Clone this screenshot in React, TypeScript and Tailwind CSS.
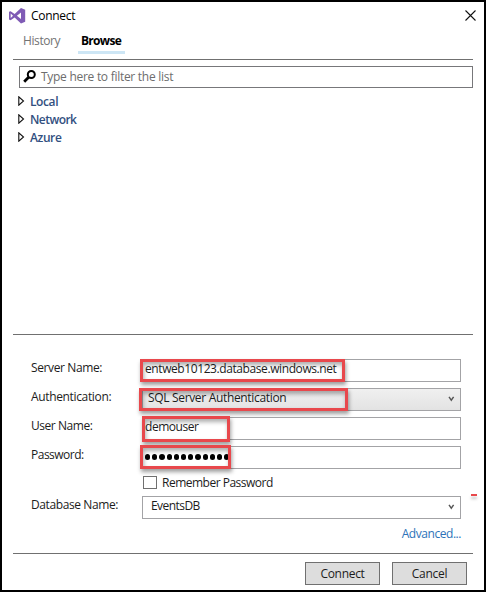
import type { ReactNode } from "react";

const highlight =
  "pointer-events-none absolute border-[3px] border-[#e8484c] shadow-[1px_3px_4px_rgba(0,0,0,0.38),inset_1px_3px_4px_rgba(0,0,0,0.32)]";

function StudioLogo() {
  return (
    <svg width="17" height="16" viewBox="0 0 17 16" className="shrink-0">
      <path
        fillRule="evenodd"
        fill="#7f5bb5"
        d="M12 0 16.2 1.8V13.8L12 15.6 5.6 9.4 1.6 12.2 0 11.4V3.8L1.6 3.2 5.6 6.1ZM12 4.6 7.9 7.8 12 11ZM1.7 5.5V10L4 7.8Z"
      />
    </svg>
  );
}

function Chevron() {
  return (
    <svg width="7" height="6" viewBox="0 0 7 6" className="mr-[5px] mb-[2px] shrink-0">
      <path d="M1 .8 3.3 4.2 5.6 .8" fill="none" stroke="#555" strokeWidth="1.4" />
    </svg>
  );
}

function TreeItem({ label, tracking }: { label: string; tracking: string }) {
  return (
    <div className="flex h-[18px] items-center">
      <svg width="7" height="10" viewBox="0 0 7 10" className="mr-[5px] mb-[2px] shrink-0">
        <path d="M.8 .8V9.2L5.5 5Z" fill="none" stroke="#111" strokeWidth="1.1" />
      </svg>
      <span className={`font-semibold text-[#32507f] ${tracking}`}>{label}</span>
    </div>
  );
}

function Field({
  label,
  tracking,
  box,
  children,
}: {
  label: string;
  tracking: string;
  box: string;
  children: ReactNode;
}) {
  return (
    <div className="flex h-[23px]">
      <label className={`w-[111px] shrink-0 pt-px ${tracking}`}>{label}</label>
      <div className={`relative flex h-[23px] w-[319px] items-center border border-[#a3a3a6] ${box}`}>
        {children}
      </div>
    </div>
  );
}

export default function App() {
  return (
    <div className="flex h-[592px] w-[486px] flex-col border-2 border-black bg-white font-['Open_Sans','Noto_Sans',sans-serif] text-[12px] leading-[16px] text-[#1c1c1c]">
      <header className="flex h-[27px] items-center pr-[8px] pl-[7px]">
        <StudioLogo />
        <span className="ml-[5px] pt-px tracking-[-0.3px] text-black">Connect</span>
        <svg width="11" height="11" viewBox="0 0 11 11" className="ml-auto">
          <path d="M.5 .5 10.5 10.5M10.5 .5 .5 10.5" stroke="#111" strokeWidth="1.1" />
        </svg>
      </header>

      <main className="mx-[11px] flex flex-1 flex-col">
        <nav className="flex h-[31px] border-b border-[#707070] pt-[4px] pl-[7px]">
          <span className="w-[58px] pl-[3px] tracking-[-0.4px] text-[#737373]">History</span>
          <span className="h-[21px] w-[47px] border-b-[3px] border-[#cde6f5] pl-[3px] font-bold tracking-[-0.7px] text-black">
            Browse
          </span>
        </nav>

        <div className="mt-[6px] ml-[6px] flex h-[22px] w-[454px] items-center border border-[#77777a] pl-[3px]">
          <svg width="13" height="13" viewBox="0 0 13 13" className="mb-px shrink-0">
            <circle cx="8.3" cy="4.5" r="3.5" fill="none" stroke="#000" strokeWidth="2" />
            <path d="M5.6 7.2 1.2 11.7" stroke="#000" strokeWidth="2.8" />
          </svg>
          <span className="ml-[5px] tracking-[-0.28px] text-[#6d6d6d]">Type here to filter the list</span>
        </div>

        <div className="mt-[5px] ml-[5px] h-[241px]">
          <TreeItem label="Local" tracking="tracking-[-0.4px]" />
          <TreeItem label="Network" tracking="tracking-[-0.55px]" />
          <TreeItem label="Azure" tracking="tracking-[-0.4px]" />
        </div>

        <form className="flex h-[220px] w-[460px] flex-col gap-[6px] border-y border-[#707070] pt-[24px] pl-[18px]">
          <Field label="Server Name:" tracking="tracking-[-0.38px]" box="bg-white">
            <span className="mb-[3px] ml-[2px] tracking-[-0.41px]">entweb10123.database.windows.net</span>
            <span className={`${highlight} -top-px -left-[3px] h-[23px] w-[205px]`} />
          </Field>
          <Field
            label="Authentication:"
            tracking="tracking-[-0.35px]"
            box="justify-between bg-linear-to-b from-[#f0f0f0] to-[#e3e3e3]"
          >
            <span className="mb-[4px] ml-[5px] tracking-[-0.33px]">SQL Server Authentication</span>
            <Chevron />
            <span className={`${highlight} -top-px -left-[4px] h-[23px] w-[209px]`} />
          </Field>
          <Field label="User Name:" tracking="tracking-[-0.45px]" box="bg-white">
            <span className="mb-[3px] ml-[2px] tracking-[-0.45px]">demouser</span>
            <span className={`${highlight} -top-[2px] -left-px h-[26px] w-[88px]`} />
          </Field>
          <Field label="Password:" tracking="tracking-[-0.5px]" box="bg-white">
            <span className="mb-[2px] ml-[2px] flex gap-[1.9px]">
              {Array.from({ length: 12 }, (_, i) => (
                <i key={i} className="h-[6px] w-[5.3px] rounded-full bg-black" />
              ))}
            </span>
            <span className={`${highlight} -top-[2px] -left-[3px] h-[24px] w-[91px]`} />
          </Field>
          <div className="ml-[112px] flex h-[15px] items-center">
            <span className="h-[13px] w-[14px] border border-[#707070] bg-white" />
            <span className="ml-[5px] tracking-[-0.5px]">Remember Password</span>
          </div>
          <Field label="Database Name:" tracking="tracking-[-0.4px]" box="justify-between bg-white">
            <span className="mb-[3px] ml-[8px] tracking-[-0.55px]">EventsDB</span>
            <Chevron />
            <span className="absolute -top-[3px] left-[328px] h-[2px] w-[6px] bg-[#e8484c] shadow-[0_3px_3px_rgba(0,0,0,0.25)]" />
          </Field>
          <a className="mt-px mr-[12px] self-end tracking-[-0.45px] text-[#2d73b9]">Advanced...</a>
        </form>

        <footer className="mt-[8px] mr-[6px] flex justify-end gap-[12px]">
          <button type="button" className="h-[23px] w-[75px] border border-[#707070] bg-[#dddddd] tracking-[-0.3px]">
            Connect
          </button>
          <button type="button" className="h-[23px] w-[75px] border border-[#707070] bg-[#dddddd] tracking-[-0.3px]">
            Cancel
          </button>
        </footer>
      </main>
    </div>
  );
}
